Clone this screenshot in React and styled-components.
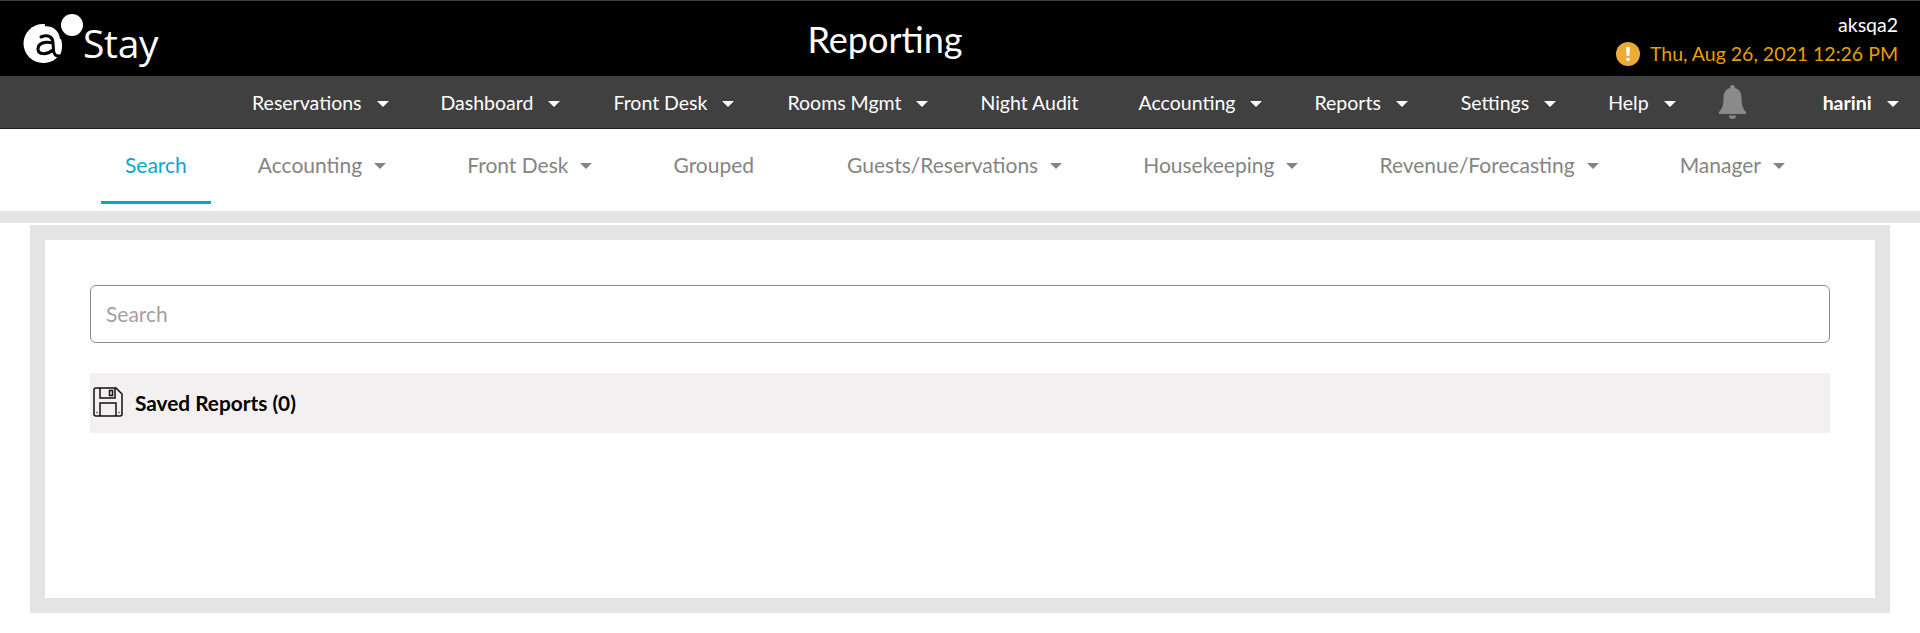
import React from 'react';
import styled, { createGlobalStyle } from 'styled-components';

const Global = createGlobalStyle`
  html, body { margin: 0; padding: 0; background: #fff; }
  body { font-family: Lato, "Open Sans", sans-serif; }
`;

const Page = styled.div`
  width: 1920px;
  height: 633px;
  overflow: hidden;
  background: #fff;
`;

const Header = styled.header`
  height: 75px;
  background: #000;
  border-top: 1px solid #3f3f3f;
  display: grid;
  grid-template-columns: 770px 1fr 420px;
`;

const Brand = styled.div`
  display: flex;
  align-items: flex-start;
  padding: 10px 0 0 20px;
`;

const BrandName = styled.span`
  font-family: "Open Sans", sans-serif;
  font-size: 39px;
  line-height: 53px;
  color: #fff;
  margin: 0 0 0 -7px;
  padding-top: 5px;
  letter-spacing: -0.3px;
`;

const Title = styled.h1`
  margin: 0;
  width: 230px;
  text-align: center;
  font-weight: 400;
  font-size: 36px;
  line-height: 76px;
  color: #fff;
`;

const Status = styled.div`
  display: flex;
  flex-direction: column;
  align-items: flex-end;
  padding: 13px 22px 0 0;
`;

const Account = styled.div`
  font-size: 19.5px;
  line-height: 21px;
  color: #fff;
`;

const DateRow = styled.div`
  display: flex;
  align-items: center;
  gap: 10px;
  margin-top: 7px;
  font-size: 19.5px;
  line-height: 24px;
  color: #e89f00;
`;

const Nav = styled.nav`
  height: 52px;
  background: #404040;
  border-bottom: 1px solid #1c1c1c;
  display: flex;
  align-items: center;
  padding-left: 252px;
  color: #fff;
  font-size: 19.5px;
`;

const NavItem = styled.div`
  display: flex;
  align-items: center;
  margin-right: ${p => p.$gap}px;
  font-weight: ${p => (p.$bold ? 700 : 400)};
  white-space: nowrap;
`;

const Caret = styled.span`
  width: 0;
  height: 0;
  margin-left: ${p => p.$offset}px;
  margin-top: 4px;
  border-left: 6px solid transparent;
  border-right: 6px solid transparent;
  border-top: 6px solid ${p => p.$color};
`;

const Tabs = styled.div`
  height: 82px;
  display: flex;
  align-items: stretch;
  padding-left: 101px;
  background: #fff;
  font-size: 21px;
  color: #848484;
`;

const Tab = styled.div`
  display: flex;
  align-items: center;
  padding: 0 24px 2px;
  margin-right: ${p => p.$gap}px;
  height: 75px;
  box-sizing: border-box;
  white-space: nowrap;
  color: ${p => (p.$active ? '#08a7cf' : 'inherit')};
  border-bottom: 3px solid ${p => (p.$active ? '#08a7cf' : 'transparent')};
`;

const Band = styled.div`
  height: 12px;
  background: #e4e4e4;
`;

const Panel = styled.main`
  box-sizing: border-box;
  width: 1860px;
  height: 388px;
  margin: 2px 0 0 30px;
  background: #fff;
  border: 15px solid #e4e4e4;
  padding: 45px 45px 0;
`;

const SearchInput = styled.input`
  display: block;
  box-sizing: border-box;
  width: 100%;
  height: 58px;
  padding: 0 15px 2px;
  border: 1px solid #8d8d8d;
  border-radius: 6px;
  outline: none;
  background: #fff;
  font-family: inherit;
  font-size: 21px;
  color: #333;
  &::placeholder { color: #a3a09e; opacity: 1; }
`;

const SavedBar = styled.div`
  margin-top: 30px;
  height: 60px;
  box-sizing: border-box;
  padding: 0 0 2px 3px;
  background: #f2f0f1;
  display: flex;
  align-items: center;
  gap: 12px;
  font-size: 20.8px;
  font-weight: 700;
  color: #000;
`;

const LogoMark = () => (
  <svg width="70" height="60" viewBox="0 0 70 60" aria-hidden="true">
    <circle cx="52" cy="14" r="11" fill="#fff" />
    <path fill="#fff" d="M23 13a19.500 19.500 0 1 0 0 39c6 0 12-2.500 15.500-7 2.500-7 3-15 1-22C36 17 30 13 23 13Z" />
    <path fill="none" stroke="#000" strokeWidth="3" strokeLinecap="round" d="M21 26c7-3 12 0 12 6l.5 7c.3 4 2 6 5 6M33 32c-8-2-15 0-15 6 0 6 9 6 15 1" />
    <path fill="none" stroke="#000" strokeWidth="2.400" strokeLinecap="round" d="M26 14c8 0 14 5 15 13" />
    <path fill="#fff" d="M41 28c2 6 1 12-1 16l-1.500-2c1-5 1.500-9 .5-14Z" />
  </svg>
);

const AlertIcon = () => (
  <svg width="24" height="24" viewBox="0 0 24 24" aria-hidden="true">
    <circle cx="12" cy="12" r="12" fill="#eaac36" />
    <path d="M10 5h4l-.7 9h-2.600Z" fill="#fff" />
    <circle cx="12" cy="17.500" r="1.800" fill="#fff" />
  </svg>
);

const BellIcon = () => (
  <svg width="27" height="34" viewBox="0 0 27 34" aria-hidden="true">
    <path fill="#8a8a8a" d="M13.500 0a2.500 2.500 0 0 0-2.500 3C6.500 4.200 4.500 8 4.500 13c0 7-1.500 11-4.500 14v2h27v-2c-3-3-4.500-7-4.500-14 0-5-2-8.800-6.500-10a2.500 2.500 0 0 0-2.500-3Z" />
    <path fill="#8a8a8a" d="M10 30.500h7a3.500 3.500 0 0 1-7 0Z" />
  </svg>
);

const SaveIcon = () => (
  <svg width="30" height="30" viewBox="0 0 30 30" fill="none" stroke="#111" strokeWidth="1.500" aria-hidden="true">
    <path d="M3 1h20l6 6v20a2 2 0 0 1-2 2H3a2 2 0 0 1-2-2V3a2 2 0 0 1 2-2Z" />
    <path d="M7 1v10h15V1" />
    <path d="M16.500 3.500h3v5h-3Z" />
    <path d="M7 29V16h16v13" />
    <path d="M3.500 25.500h1M25.500 25.500h1" />
  </svg>
);

const navItems = [
  ['Reservations', 52, true],
  ['Dashboard', 53, true],
  ['Front Desk', 53, true],
  ['Rooms Mgmt', 52, true],
  ['Night Audit', 60, false],
  ['Accounting', 52, true],
  ['Reports', 53, true],
  ['Settings', 52, true],
  ['Help', 43, true],
];

const tabs = [
  ['Search', 23, false],
  ['Accounting', 33, true],
  ['Front Desk', 33, true],
  ['Grouped', 45, false],
  ['Guests/Reservations', 33, true],
  ['Housekeeping', 33, true],
  ['Revenue/Forecasting', 33, true],
  ['Manager', 0, true],
];

export default function App() {
  return (
    <Page>
      <Global />
      <Header>
        <Brand>
          <LogoMark />
          <BrandName>Stay</BrandName>
        </Brand>
        <Title>Reporting</Title>
        <Status>
          <Account>aksqa2</Account>
          <DateRow>
            <AlertIcon />
            Thu, Aug 26, 2021 12:26 PM
          </DateRow>
        </Status>
      </Header>
      <Nav>
        {navItems.map(([label, gap, caret]) => (
          <NavItem key={label} $gap={gap}>
            {label}
            {caret && <Caret $offset={15} $color="#fff" />}
          </NavItem>
        ))}
        <NavItem $gap={77}><BellIcon /></NavItem>
        <NavItem $gap={0} $bold>harini<Caret $offset={15} $color="#fff" /></NavItem>
      </Nav>
      <Tabs>
        {tabs.map(([label, gap, caret], i) => (
          <Tab key={label} $gap={gap} $active={i === 0}>
            {label}
            {caret && <Caret $offset={12} $color="#848484" />}
          </Tab>
        ))}
      </Tabs>
      <Band />
      <Panel>
        <SearchInput placeholder="Search" />
        <SavedBar>
          <SaveIcon />
          Saved Reports (0)
        </SavedBar>
      </Panel>
    </Page>
  );
}
